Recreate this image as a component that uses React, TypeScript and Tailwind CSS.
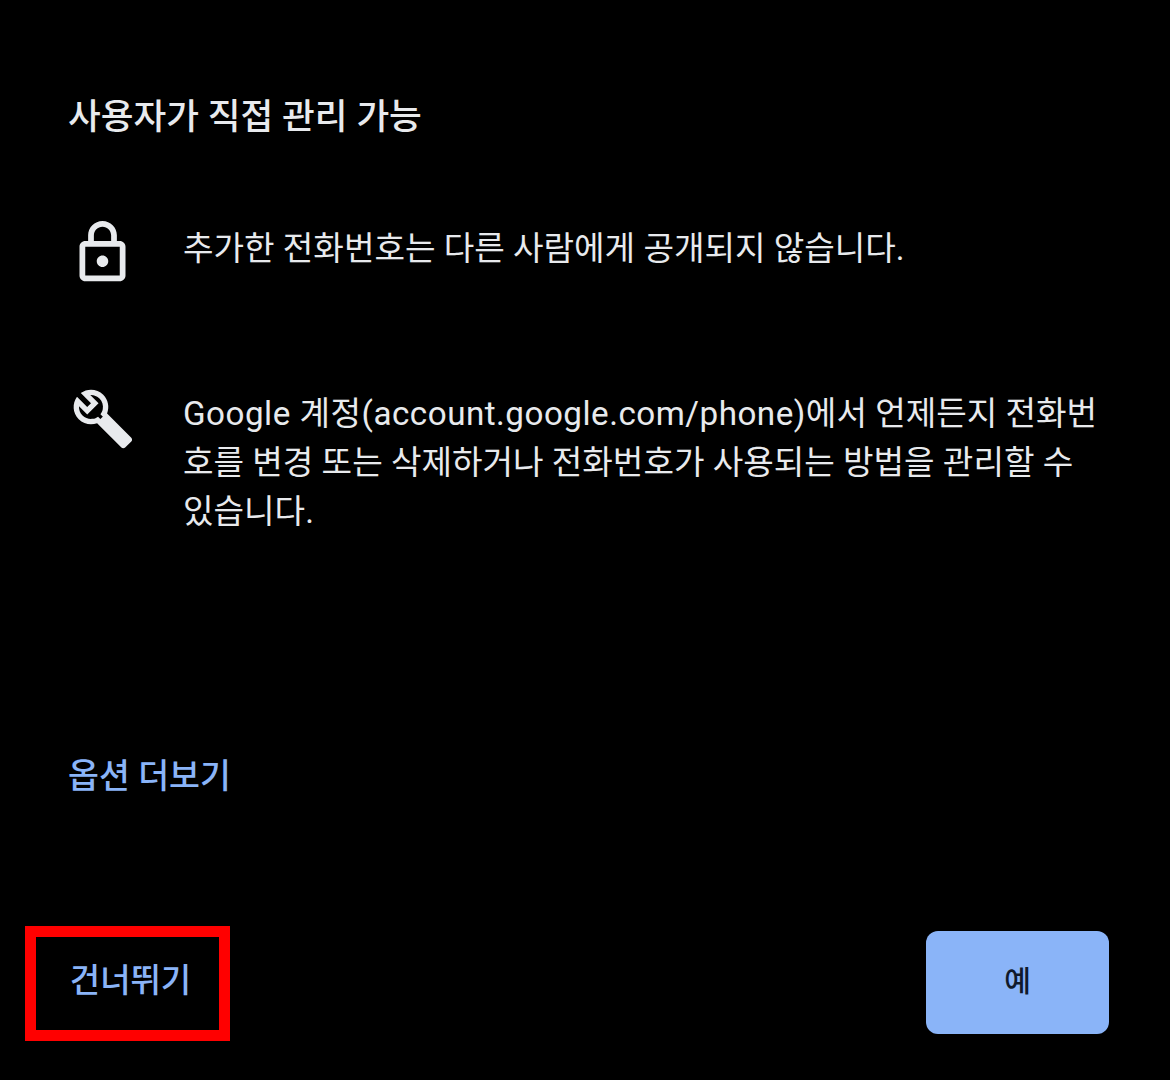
const font = "font-['Roboto','Noto_Sans_CJK_KR',sans-serif]";

function LockIcon() {
  return (
    <svg viewBox="0 0 24 24" className="w-[69px] h-[69px] shrink-0" fill="#e8eaed">
      <path d="M18 8h-1V6c0-2.76-2.24-5-5-5S7 3.24 7 6v2H6c-1.1 0-2 .9-2 2v10c0 1.1.9 2 2 2h12c1.1 0 2-.9 2-2V10c0-1.1-.9-2-2-2zM9 6c0-1.66 1.34-3 3-3s3 1.34 3 3v2H9V6zm9 14H6V10h12v10zm-6-3c1.1 0 2-.9 2-2s-.9-2-2-2-2 .9-2 2 .9 2 2 2z" />
    </svg>
  );
}

function WrenchIcon() {
  return (
    <svg viewBox="0 0 24 24" className="w-[64px] h-[64px] shrink-0" fill="#e8eaed">
      <path d="M22.61 18.99l-9.08-9.08c.93-2.34.45-5.1-1.44-7C9.79.61 6.21.4 3.66 2.26L7.5 6.11 6.08 7.52 2.25 3.69C.39 6.23.6 9.82 2.9 12.11c1.86 1.86 4.57 2.35 6.89 1.48l9.11 9.11c.39.39 1.02.39 1.41 0l2.3-2.3c.4-.38.4-1.01 0-1.41zm-3 1.6l-9.46-9.46c-.61.45-1.29.72-2 .82-1.36.2-2.79-.21-3.83-1.25C3.37 9.76 2.93 8.5 3 7.26l3.09 3.09 4.24-4.24-3.09-3.09c1.24-.07 2.49.37 3.44 1.31 1.08 1.08 1.49 2.57 1.24 3.96-.12.71-.42 1.37-.88 1.96l9.45 9.45-.88.88z" />
      <path d="M11.5 11.5 L20.6 20.6" stroke="#e8eaed" strokeWidth="3.2" fill="none" />
    </svg>
  );
}

export default function App() {
  return (
    <div className={`${font} w-[1170px] h-[1080px] bg-black flex flex-col overflow-hidden`}>
      <h1 className="ml-[68px] mt-[94px] text-[35.6px] leading-[47px] font-medium text-[#e8eaed]">
        사용자가 직접 관리 가능
      </h1>

      <div className="mt-[77px] flex items-start pl-[68px]">
        <div className="w-[115px] shrink-0">
          <LockIcon />
        </div>
        <p className="mt-[6px] text-[33.2px] leading-[49px] text-[#e8eaed]">
          추가한 전화번호는 다른 사람에게 공개되지 않습니다.
        </p>
      </div>

      <div className="mt-[102px] flex items-start pl-[68px]">
        <div className="w-[115px] shrink-0 pl-[3px] -mt-[2px]">
          <WrenchIcon />
        </div>
        <p className="w-[925px] text-[33.2px] leading-[49px] text-[#e8eaed]">
          <span className="tracking-[0.5px]">Google 계정(account.google.com/phone)</span>에서 언제든지 전화번호를 변경 또는 삭제하거나 전화번호가 사용되는 방법을 관리할 수 있습니다.
        </p>
      </div>

      <button className="ml-[68px] mt-[217px] self-start text-[33.6px] leading-[47px] font-medium text-[#8ab4f8]">
        옵션 더보기
      </button>

      <div className="mt-[126px] flex items-start justify-between pl-[25px] pr-[61px]">
        <button className="w-[205px] h-[115px] border-[11px] border-[#ff0000] pl-[6px] pb-[6px] text-[33px] font-medium text-[#8ab4f8]">
          건너뛰기
        </button>
        <button className="mt-[5px] w-[183px] h-[103px] rounded-[12px] bg-[#8ab4f8] text-[29px] font-medium text-[#101a2c]">
          예
        </button>
      </div>
    </div>
  );
}
